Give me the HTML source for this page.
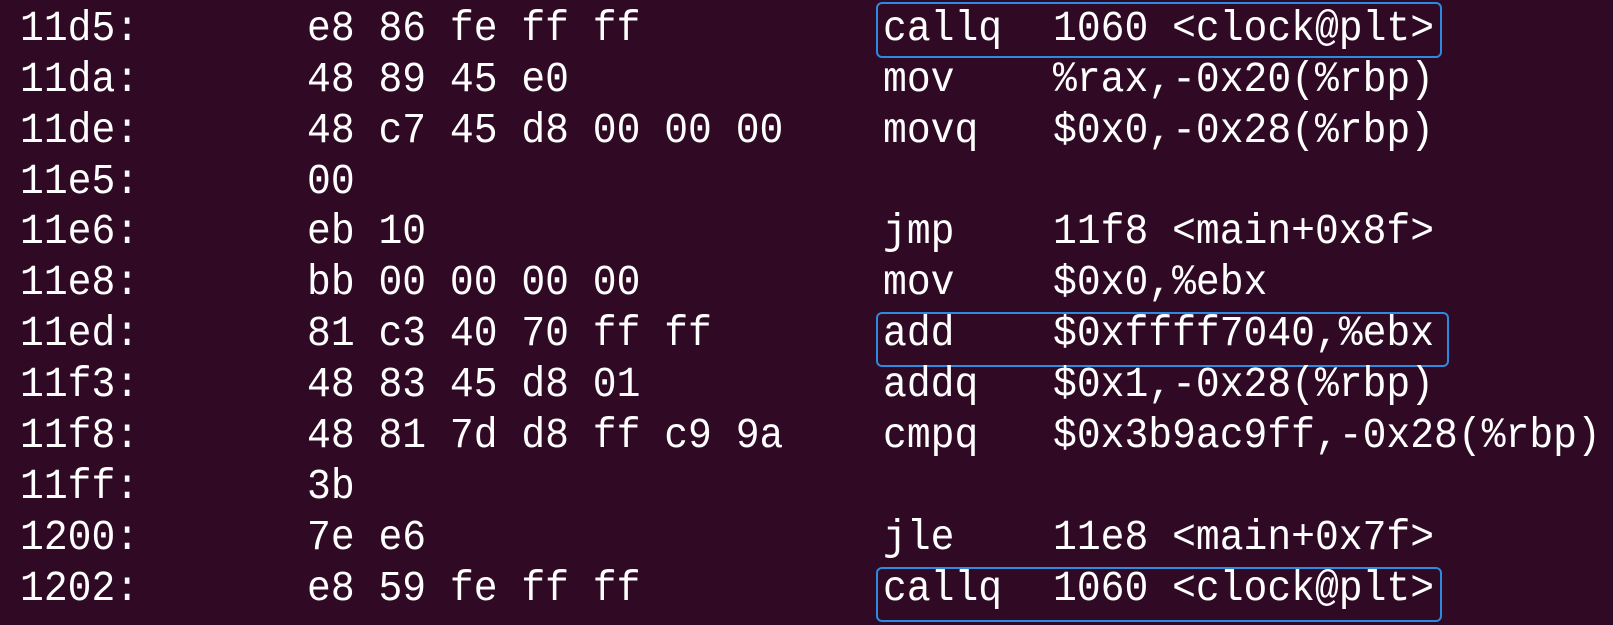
<!DOCTYPE html>
<html><head><meta charset="utf-8"><style>
body{margin:0;background:#300a24;width:1613px;height:625px;overflow:hidden;position:relative}
.r{position:absolute;left:0;height:51px;line-height:51px;font-family:"Liberation Mono",monospace;font-size:39.7px;color:#fff;white-space:pre}
.r span{position:absolute;top:0;transform:scaleY(1.07);transform-origin:0 36px}
.a{left:20px}.b{left:307px}.m{left:883px}.o{left:1053px}
.box{position:absolute;border:2px solid #2a8be0;border-radius:6px;box-sizing:border-box}
</style></head><body>
<div class="box" style="left:876px;top:2px;width:566px;height:56px"></div>
<div class="box" style="left:876px;top:312px;width:573px;height:55px"></div>
<div class="box" style="left:876px;top:567px;width:566px;height:55px"></div>
<div class="r" style="top:4px"><span class="a">11d5:</span><span class="b">e8 86 fe ff ff</span><span class="m">callq</span><span class="o">1060 &lt;clock@plt&gt;</span></div>
<div class="r" style="top:55px"><span class="a">11da:</span><span class="b">48 89 45 e0</span><span class="m">mov</span><span class="o">%rax,-0x20(%rbp)</span></div>
<div class="r" style="top:106px"><span class="a">11de:</span><span class="b">48 c7 45 d8 00 00 00</span><span class="m">movq</span><span class="o">$0x0,-0x28(%rbp)</span></div>
<div class="r" style="top:157px"><span class="a">11e5:</span><span class="b">00</span></div>
<div class="r" style="top:207px"><span class="a">11e6:</span><span class="b">eb 10</span><span class="m">jmp</span><span class="o">11f8 &lt;main+0x8f&gt;</span></div>
<div class="r" style="top:258px"><span class="a">11e8:</span><span class="b">bb 00 00 00 00</span><span class="m">mov</span><span class="o">$0x0,%ebx</span></div>
<div class="r" style="top:309px"><span class="a">11ed:</span><span class="b">81 c3 40 70 ff ff</span><span class="m">add</span><span class="o">$0xffff7040,%ebx</span></div>
<div class="r" style="top:360px"><span class="a">11f3:</span><span class="b">48 83 45 d8 01</span><span class="m">addq</span><span class="o">$0x1,-0x28(%rbp)</span></div>
<div class="r" style="top:411px"><span class="a">11f8:</span><span class="b">48 81 7d d8 ff c9 9a</span><span class="m">cmpq</span><span class="o">$0x3b9ac9ff,-0x28(%rbp)</span></div>
<div class="r" style="top:462px"><span class="a">11ff:</span><span class="b">3b</span></div>
<div class="r" style="top:513px"><span class="a">1200:</span><span class="b">7e e6</span><span class="m">jle</span><span class="o">11e8 &lt;main+0x7f&gt;</span></div>
<div class="r" style="top:564px"><span class="a">1202:</span><span class="b">e8 59 fe ff ff</span><span class="m">callq</span><span class="o">1060 &lt;clock@plt&gt;</span></div>
</body></html>
